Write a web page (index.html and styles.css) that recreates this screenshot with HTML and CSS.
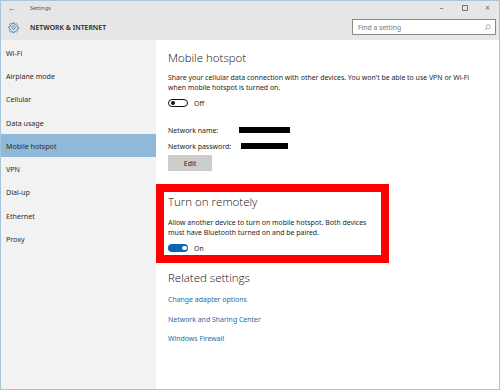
FILE: index.html
```html
<!DOCTYPE html>
<html>
<head>
<meta charset="utf-8">
<link rel="stylesheet" href="styles.css">
</head>
<body>
<div class="window">
  <div class="titlebar">
    <span class="back">&#8592;</span>
    <span class="apptitle">Settings</span>
    <span class="spacer"></span>
    <span class="ctrl">&#8211;</span>
    <span class="ctrl"><span class="maxbox"></span></span>
    <span class="ctrl">&#215;</span>
  </div>
  <div class="header">
    <svg class="gear" width="11" height="11" viewBox="0 0 24 24"><path d="M10.3 2h3.4l.5 2.8 1.8.8 2.4-1.6 2.4 2.4-1.6 2.4.8 1.8 2.8.5v3.4l-2.8.5-.8 1.8 1.6 2.4-2.4 2.4-2.4-1.6-1.8.8-.5 2.8h-3.4l-.5-2.8-1.8-.8-2.4 1.6-2.4-2.4 1.6-2.4-.8-1.8L2 13.7v-3.4l2.8-.5.8-1.8L4 5.6 6.4 3.2l2.4 1.6 1.8-.8z" fill="none" stroke="#2f6fb3" stroke-width="1.8" stroke-linejoin="round"/><circle cx="12" cy="12" r="3.6" fill="none" stroke="#2f6fb3" stroke-width="1.8"/></svg>
    <span class="section-name">NETWORK &amp; INTERNET</span>
    <span class="spacer"></span>
    <div class="search">
      <span class="search-text">Find a setting</span>
      <svg width="7" height="7" viewBox="0 0 10 10"><circle cx="6" cy="4" r="3" fill="none" stroke="#888" stroke-width="0.9"/><path d="M4 6L1 9" stroke="#888" stroke-width="0.9"/></svg>
    </div>
  </div>
  <div class="main">
    <nav class="sidebar">
      <div class="nav-item">Wi-Fi</div>
      <div class="nav-item">Airplane mode</div>
      <div class="nav-item">Cellular</div>
      <div class="nav-item">Data usage</div>
      <div class="nav-item active">Mobile hotspot</div>
      <div class="nav-item">VPN</div>
      <div class="nav-item">Dial-up</div>
      <div class="nav-item">Ethernet</div>
      <div class="nav-item">Proxy</div>
    </nav>
    <div class="content">
      <section class="block first">
        <h1 class="title">Mobile hotspot</h1>
        <p class="desc">Share your cellular data connection with other devices. You won't be able to use VPN or Wi-Fi<br>when mobile hotspot is turned on.</p>
        <div class="toggle-row">
          <span class="toggle off"><span class="knob"></span></span>
          <span class="toggle-label">Off</span>
        </div>
        <div class="field">
          <span class="field-label">Network name:</span>
          <span class="redact name"></span>
        </div>
        <div class="field">
          <span class="field-label">Network password:</span>
          <span class="redact pass"></span>
        </div>
        <button class="edit">Edit</button>
      </section>
      <section class="block highlight">
        <h1 class="title">Turn on remotely</h1>
        <p class="desc tight">Allow another device to turn on mobile hotspot. Both devices<br>must have Bluetooth turned on and be paired.</p>
        <div class="toggle-row on-row">
          <span class="toggle on"><span class="knob"></span></span>
          <span class="toggle-label">On</span>
        </div>
      </section>
      <section class="block related">
        <h1 class="title">Related settings</h1>
        <a class="link">Change adapter options</a>
        <a class="link">Network and Sharing Center</a>
        <a class="link">Windows Firewall</a>
      </section>
    </div>
  </div>
</div>
</body>
</html>
```
FILE: styles.css
```css
html, body {
  margin: 0;
  padding: 0;
  background: #fff;
}
body {
  font-family: "Noto Sans", "Open Sans", sans-serif;
  color: #222;
}
.window {
  width: 500px;
  height: 390px;
  box-sizing: border-box;
  border: 1px solid #a3c6dc;
  display: flex;
  flex-direction: column;
  overflow: hidden;
}
.titlebar {
  height: 13px;
  background: #e6e6e6;
  display: flex;
  align-items: center;
  font-size: 5.5px;
  color: #444;
}
.back {
  font-size: 8px;
  margin-left: 7px;
  width: 22px;
  color: #333;
}
.apptitle {
  font-size: 5.5px;
  color: #555;
}
.spacer { flex: 1; }
.ctrl {
  width: 23px;
  text-align: center;
  font-size: 8px;
  color: #666;
  display: flex;
  justify-content: center;
  align-items: center;
}
.maxbox {
  width: 4px;
  height: 4px;
  border: 1px solid #777;
}
.header {
  height: 26px;
  background: #e6e6e6;
  display: flex;
  align-items: center;
}
.gear {
  margin-left: 7px;
  margin-right: 11px;
}
.section-name {
  font-size: 6.8px;
  font-weight: 600;
  color: #222;
  letter-spacing: 0.05px;
}
.search {
  width: 144px;
  height: 16px;
  box-sizing: border-box;
  border: 1px solid #8a8a8a;
  background: #fff;
  margin-right: 3px;
  display: flex;
  align-items: center;
  padding: 0 4px 0 5px;
}
.search-text {
  flex: 1;
  font-size: 6.8px;
  color: #777;
}
.main {
  flex: 1;
  display: flex;
}
.sidebar {
  width: 155px;
  background: #f2f2f2;
  padding-top: 1px;
}
.nav-item {
  height: 23.3px;
  display: flex;
  align-items: center;
  padding-left: 5px;
  font-size: 7.1px;
  color: #2a2a2a;
}
.nav-item.active {
  background: #8fb8d9;
}
.content {
  flex: 1;
  background: #fff;
}
.block {
  padding-left: 12px;
}
.first {
  padding-top: 11px;
}
.title {
  margin: 0;
  font-family: "Open Sans", "Noto Sans", sans-serif;
  font-size: 11.5px;
  line-height: 14px;
  font-weight: 300;
  color: #111;
}
.desc {
  margin: 8px 0 0 0;
  font-size: 6.95px;
  line-height: 10px;
  color: #1e1e1e;
}
.toggle-row {
  margin-top: 6px;
  height: 8px;
  display: flex;
  align-items: center;
}
.toggle {
  width: 20px;
  height: 8px;
  box-sizing: border-box;
  border-radius: 4px;
  display: flex;
  align-items: center;
  padding: 0 1.5px;
}
.toggle.off {
  border: 1.2px solid #111;
}
.toggle.on {
  background: #0c64b4;
  justify-content: flex-end;
}
.knob {
  width: 4.5px;
  height: 4.5px;
  border-radius: 50%;
  background: #111;
}
.toggle.on .knob { background: #fff; }
.toggle-label {
  margin-left: 6px;
  font-size: 6.9px;
  color: #222;
}
.field {
  height: 16px;
  display: flex;
  align-items: center;
  font-size: 6.95px;
}
.toggle-row + .field { margin-top: 15px; }
.field-label { width: 71px; }
.redact {
  height: 6px;
  background: #000;
}
.redact.name { width: 51px; }
.redact.pass { width: 47px; margin-left: 2px; }
.edit {
  margin-top: 1px;
  width: 44px;
  height: 16px;
  border: none;
  background: #cccccc;
  font-family: inherit;
  font-size: 6.9px;
  color: #222;
  padding: 1px 0 0 0;
  display: block;
}
.highlight {
  margin-top: 13px;
  width: 233px;
  box-sizing: border-box;
  border: 8px solid #ff0000;
  padding: 3px 0 3px 4px;
}
.desc.tight { margin-top: 9px; }
.related {
  margin-top: 8px;
  display: flex;
  flex-direction: column;
}
.link {
  font-size: 6.95px;
  line-height: 10px;
  color: #2c6aa0;
  margin-top: 9.5px;
}
.related .title + .link { margin-top: 10px; }
```
